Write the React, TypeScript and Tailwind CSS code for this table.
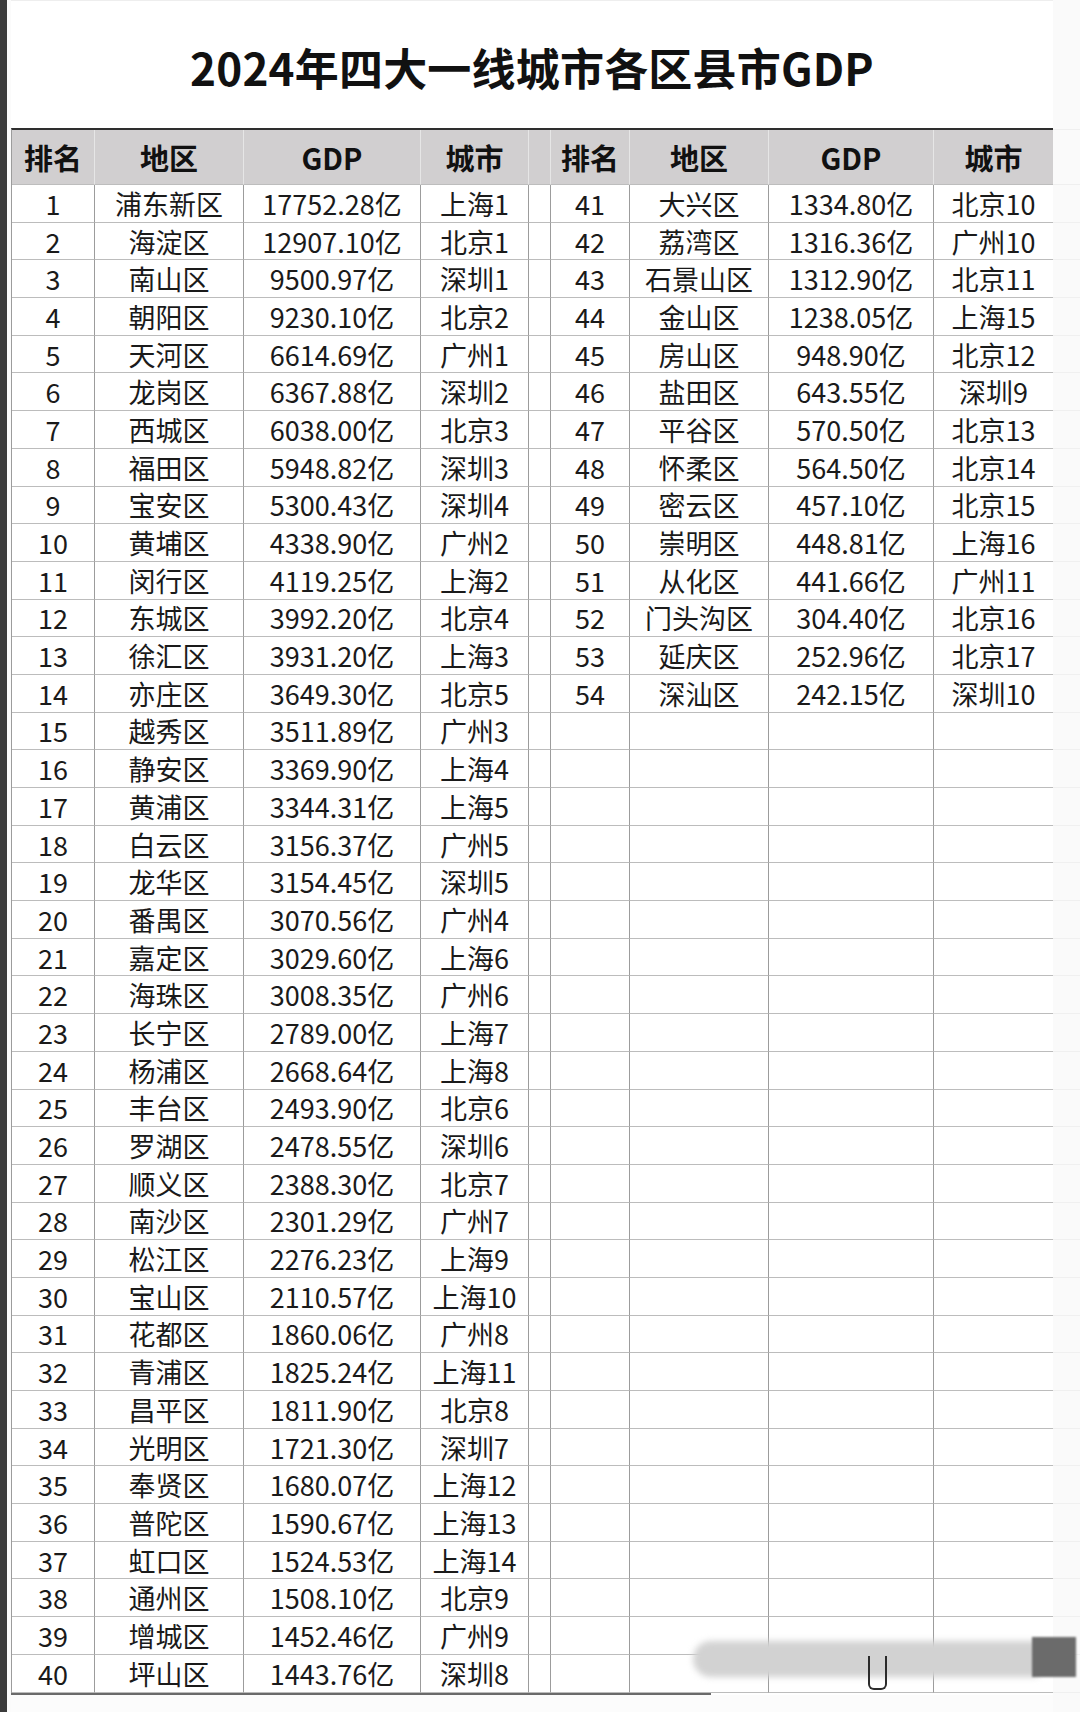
import React from "react";

type Row = [string, string, string, string];

const leftRows: Row[] = [
  ["1", "浦东新区", "17752.28亿", "上海1"],
  ["2", "海淀区", "12907.10亿", "北京1"],
  ["3", "南山区", "9500.97亿", "深圳1"],
  ["4", "朝阳区", "9230.10亿", "北京2"],
  ["5", "天河区", "6614.69亿", "广州1"],
  ["6", "龙岗区", "6367.88亿", "深圳2"],
  ["7", "西城区", "6038.00亿", "北京3"],
  ["8", "福田区", "5948.82亿", "深圳3"],
  ["9", "宝安区", "5300.43亿", "深圳4"],
  ["10", "黄埔区", "4338.90亿", "广州2"],
  ["11", "闵行区", "4119.25亿", "上海2"],
  ["12", "东城区", "3992.20亿", "北京4"],
  ["13", "徐汇区", "3931.20亿", "上海3"],
  ["14", "亦庄区", "3649.30亿", "北京5"],
  ["15", "越秀区", "3511.89亿", "广州3"],
  ["16", "静安区", "3369.90亿", "上海4"],
  ["17", "黄浦区", "3344.31亿", "上海5"],
  ["18", "白云区", "3156.37亿", "广州5"],
  ["19", "龙华区", "3154.45亿", "深圳5"],
  ["20", "番禺区", "3070.56亿", "广州4"],
  ["21", "嘉定区", "3029.60亿", "上海6"],
  ["22", "海珠区", "3008.35亿", "广州6"],
  ["23", "长宁区", "2789.00亿", "上海7"],
  ["24", "杨浦区", "2668.64亿", "上海8"],
  ["25", "丰台区", "2493.90亿", "北京6"],
  ["26", "罗湖区", "2478.55亿", "深圳6"],
  ["27", "顺义区", "2388.30亿", "北京7"],
  ["28", "南沙区", "2301.29亿", "广州7"],
  ["29", "松江区", "2276.23亿", "上海9"],
  ["30", "宝山区", "2110.57亿", "上海10"],
  ["31", "花都区", "1860.06亿", "广州8"],
  ["32", "青浦区", "1825.24亿", "上海11"],
  ["33", "昌平区", "1811.90亿", "北京8"],
  ["34", "光明区", "1721.30亿", "深圳7"],
  ["35", "奉贤区", "1680.07亿", "上海12"],
  ["36", "普陀区", "1590.67亿", "上海13"],
  ["37", "虹口区", "1524.53亿", "上海14"],
  ["38", "通州区", "1508.10亿", "北京9"],
  ["39", "增城区", "1452.46亿", "广州9"],
  ["40", "坪山区", "1443.76亿", "深圳8"],
];

const rightRows: Row[] = [
  ["41", "大兴区", "1334.80亿", "北京10"],
  ["42", "荔湾区", "1316.36亿", "广州10"],
  ["43", "石景山区", "1312.90亿", "北京11"],
  ["44", "金山区", "1238.05亿", "上海15"],
  ["45", "房山区", "948.90亿", "北京12"],
  ["46", "盐田区", "643.55亿", "深圳9"],
  ["47", "平谷区", "570.50亿", "北京13"],
  ["48", "怀柔区", "564.50亿", "北京14"],
  ["49", "密云区", "457.10亿", "北京15"],
  ["50", "崇明区", "448.81亿", "上海16"],
  ["51", "从化区", "441.66亿", "广州11"],
  ["52", "门头沟区", "304.40亿", "北京16"],
  ["53", "延庆区", "252.96亿", "北京17"],
  ["54", "深汕区", "242.15亿", "深圳10"],
];

const headers = ["排名", "地区", "GDP", "城市"];

function Cell({ text, last }: { text?: string; last?: boolean }) {
  return (
    <div
      className={
        "flex items-center justify-center border-b border-r border-b-[#bcbcbc] text-[27px] leading-none text-[#1a1a1a] " +
        (last ? "border-r-[#3a3a3a]" : "border-r-[#9c9c9c]")
      }
    >
      {text}
    </div>
  );
}

function HeadCell({ text, last }: { text?: string; last?: boolean }) {
  return (
    <div
      className={
        "flex items-center justify-center border-b border-r border-b-[#bdbdbd] bg-[#d1cfd0] text-[29px] font-bold leading-none text-[#111] " +
        (last ? "border-r-[#3a3a3a]" : "border-r-[#e6e6e6]")
      }
    >
      {text}
    </div>
  );
}

export default function App() {
  const rows = Array.from({ length: 40 }, (_, i) => i);

  return (
    <div
      className="relative flex h-[1712px] w-[1080px] overflow-hidden bg-white"
      style={{ fontFamily: '"Noto Sans CJK SC", "Noto Sans", sans-serif' }}
    >
      <div className="w-[7px] shrink-0 bg-[#3b3b3b]" />
      <div className="w-[4px] shrink-0 bg-[#fbfbfb]" />

      <div className="flex w-[1042px] shrink-0 flex-col">
        <div className="flex h-[128px] items-center justify-center border-t border-[#eeeeee] pt-[4px]">
          <h1 className="text-[44px] font-bold leading-none tracking-[0.2px] text-[#111]">
            2024年四大一线城市各区县市GDP
          </h1>
        </div>

        <div className="grid grid-cols-[83px_149px_177px_108px_22px_79px_139px_165px_120px] grid-rows-[55px_repeat(40,37.7px)] border-l border-t-2 border-l-[#9c9c9c] border-t-[#2e2e2e]">
          {headers.map((h) => (
            <HeadCell key={"l" + h} text={h} />
          ))}
          <HeadCell />
          {headers.map((h, j) => (
            <HeadCell key={"r" + h} text={h} last={j === 3} />
          ))}

          {rows.map((i) => {
            const l = leftRows[i];
            const r = rightRows[i];
            return (
              <React.Fragment key={i}>
                {l.map((t, j) => (
                  <Cell key={"l" + j} text={t} />
                ))}
                <Cell />
                {[0, 1, 2, 3].map((j) => (
                  <Cell key={"r" + j} text={r ? r[j] : undefined} last={j === 3} />
                ))}
              </React.Fragment>
            );
          })}
        </div>
        <div className="h-[2px] w-[700px] bg-[#6a6a6a]" />
        <div className="flex-1 bg-[#fcfcfc]" />
      </div>

      <div className="flex flex-1 flex-col bg-[#fafafa]">
        <div className="h-[130px] border-b border-[#efefef]" />
        <div className="h-[55px] border-b border-[#efefef]" />
        {rows.map((i) => (
          <div key={i} className="h-[37.7px] shrink-0 border-b border-[#f0f0f0]" />
        ))}
      </div>

      {/* blurred scroll bar artifact at the bottom */}
      <div className="absolute left-[693px] top-[1641px] h-[36px] w-[345px] rounded-l-[18px] bg-[#d2d2d2] blur-[3px]" />
      <div className="absolute left-[1032px] top-[1637px] h-[40px] w-[44px] bg-[#6b6b6b] blur-[1px]" />
      <div className="absolute left-[868px] top-[1656px] h-[34px] w-[19px] rounded-b-[6px] border-2 border-t-0 border-[#2b2b2b] blur-[0.6px]" />
    </div>
  );
}
